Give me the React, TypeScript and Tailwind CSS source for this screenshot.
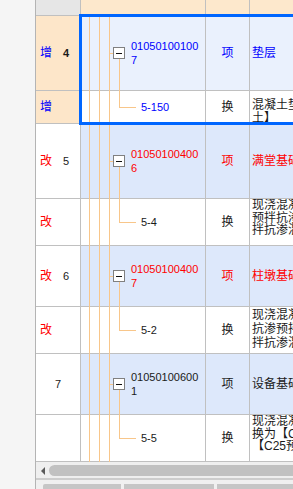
const LINE = "bg-[#f8c68a]";

type Tone = "blue" | "red" | "black";

const toneClass: Record<Tone, string> = {
  blue: "text-[#0000ff]",
  red: "text-[#ff0000]",
  black: "text-[#1a1a1a]",
};

type Row =
  | {
      kind: "item";
      h: string;
      bg: string;
      tagBg: string;
      tag?: string;
      num: string;
      bold?: boolean;
      code: [string, string];
      name: string;
      tone: Tone;
    }
  | {
      kind: "sub";
      h: string;
      bg: string;
      tagBg: string;
      tag?: string;
      code: string;
      codeTone: Tone;
      lines: string[];
      pad?: string;
      leading?: string;
    };

const rows: Row[] = [
  { kind: "item", h: "h-[75px]", bg: "bg-[#eaf1fd]", tagBg: "bg-[#fde6c9]", tag: "增", num: "4", bold: true, code: ["01050100100", "7"], name: "垫层", tone: "blue" },
  { kind: "sub", h: "h-[33px]", bg: "bg-white", tagBg: "bg-[#fde6c9]", tag: "增", code: "5-150", codeTone: "blue", lines: ["混凝土垫层 换为【C15预拌混凝", "土】"], pad: "pt-[8px]" },
  { kind: "item", h: "h-[75px]", bg: "bg-[#dde8fb]", tagBg: "bg-white", tag: "改", num: "5", code: ["01050100400", "6"], name: "满堂基础", tone: "red" },
  { kind: "sub", h: "h-[47px]", bg: "bg-white", tagBg: "bg-white", tag: "改", code: "5-4", codeTone: "black", lines: ["现浇混凝土 满堂基础 换为【C30", "预拌抗渗混凝土P6】 换为【C30预", "拌抗渗混凝土P8】"] },
  { kind: "item", h: "h-[61px]", bg: "bg-[#dde8fb]", tagBg: "bg-white", tag: "改", num: "6", code: ["01050100400", "7"], name: "柱墩基础", tone: "red" },
  { kind: "sub", h: "h-[47px]", bg: "bg-white", tagBg: "bg-white", tag: "改", code: "5-2", codeTone: "black", lines: ["现浇混凝土 柱墩 换为【C30预拌", "抗渗预拌混凝土P6】 换为【C30", "拌抗渗混凝土P8】"], pad: "pt-px", leading: "leading-[14px]" },
  { kind: "item", h: "h-[61px]", bg: "bg-[#dde8fb]", tagBg: "bg-white", num: "7", code: ["01050100600", "1"], name: "设备基础", tone: "black" },
  { kind: "sub", h: "h-[47px]", bg: "bg-white", tagBg: "bg-white", code: "5-5", codeTone: "black", lines: ["现浇混凝土 设备基础", "换为【C25预拌混凝土】", "【C25预拌混凝土】"] },
];

function Guides() {
  return (
    <>
      <div className={`absolute left-[8px] top-0 bottom-[-1px] w-px ${LINE}`} />
      <div className={`absolute left-[18px] top-0 bottom-[-1px] w-px ${LINE}`} />
      <div className={`absolute left-[28px] top-0 bottom-[-1px] w-px ${LINE}`} />
    </>
  );
}

function TagCell({ tag, num, bold, bg }: { tag?: string; num?: string; bold?: boolean; bg: string }) {
  const tone = tag === "增" ? "text-[#0000ff]" : "text-[#ff0000]";
  return (
    <div className={`flex h-full w-[45px] shrink-0 items-center border-r border-b border-[#c0c0c0] ${bg}`}>
      {tag && <span className={`ml-[4px] w-[12px] text-[12px] ${tone}`}>{tag}</span>}
      {num && (
        <span className={`flex-1 text-center text-[11px] text-[#1a1a1a] ${bold ? "font-bold" : ""}`}>{num}</span>
      )}
    </div>
  );
}

function ItemRow({ row }: { row: Extract<Row, { kind: "item" }> }) {
  const tone = toneClass[row.tone];
  return (
    <div className={`flex ${row.h}`}>
      <TagCell tag={row.tag} num={row.num} bold={row.bold} bg={row.tagBg} />
      <div className={`relative flex h-full w-[125px] shrink-0 items-center border-r border-b border-[#c0c0c0] ${row.bg}`}>
        <Guides />
        <div className={`absolute left-[28px] top-1/2 h-px w-[4px] ${LINE}`} />
        <div className={`absolute left-[38px] top-1/2 bottom-[-1px] w-px ${LINE}`} />
        <div className="relative ml-[32px] flex h-[12px] w-[12px] shrink-0 items-center justify-center border border-[#808080] bg-white">
          <span className="h-px w-[6px] bg-[#111]" />
        </div>
        <div className={`ml-[6px] text-[11px] leading-[14px] ${tone}`}>
          <div>{row.code[0]}</div>
          <div>{row.code[1]}</div>
        </div>
      </div>
      <div className={`flex h-full w-[44px] shrink-0 items-center justify-center border-r border-b border-[#c0c0c0] text-[12px] ${row.bg} ${tone}`}>
        项
      </div>
      <div className={`flex h-full min-w-0 flex-1 items-center overflow-hidden whitespace-nowrap border-b border-[#c0c0c0] pl-[2px] text-[12px] ${row.bg} ${tone}`}>
        {row.name}
      </div>
    </div>
  );
}

function SubRow({ row }: { row: Extract<Row, { kind: "sub" }> }) {
  return (
    <div className={`flex ${row.h}`}>
      <TagCell tag={row.tag} bg={row.tagBg} />
      <div className={`relative flex h-full w-[125px] shrink-0 items-center border-r border-b border-[#c0c0c0] ${row.bg}`}>
        <Guides />
        <div className={`absolute left-[38px] top-0 h-1/2 w-px ${LINE}`} />
        <div className={`absolute left-[38px] top-1/2 h-px w-[17px] ${LINE}`} />
        <span className={`ml-[60px] text-[11px] ${toneClass[row.codeTone]}`}>{row.code}</span>
      </div>
      <div className={`flex h-full w-[44px] shrink-0 items-center justify-center border-r border-b border-[#c0c0c0] text-[12px] text-[#1a1a1a] ${row.bg}`}>
        换
      </div>
      <div
        className={`h-full min-w-0 flex-1 overflow-hidden whitespace-nowrap border-b border-[#c0c0c0] pl-[2px] text-[12px] text-[#1a1a1a] ${row.leading ?? "leading-[12.5px]"} ${row.pad ?? ""} ${row.bg}`}
      >
        {row.lines.map((l, i) => (
          <div key={i}>{l}</div>
        ))}
      </div>
    </div>
  );
}

export default function App() {
  return (
    <div className="flex h-[489px] w-[293px] overflow-hidden bg-[#f0f0f0] font-['Liberation_Sans','Noto_Sans_CJK_SC',sans-serif]">
      {/* side strip */}
      <div className="h-full w-[36px] shrink-0 border-r border-[#b4b4b4] bg-[#f5f5f5]" />

      <div className="flex min-w-0 flex-1 flex-col">
        <div className="relative h-[462px] overflow-hidden bg-white">
          {/* header */}
          <div className="flex h-[16px]">
            <div className="h-full w-[45px] shrink-0 border-r border-b border-[#c0c0c0] bg-[#e6e6e6]" />
            <div className="h-full w-[125px] shrink-0 border-r border-b border-[#c0c0c0] bg-[#fde8cc]" />
            <div className="h-full w-[44px] shrink-0 border-r border-b border-[#c0c0c0] bg-[#fde8cc]" />
            <div className="h-full flex-1 border-b border-[#c0c0c0] bg-[#fde8cc]" />
          </div>

          {rows.map((r, i) => (r.kind === "item" ? <ItemRow key={i} row={r} /> : <SubRow key={i} row={r} />))}

          {/* selection frame */}
          <div className="pointer-events-none absolute left-[43px] top-[14px] h-[111px] w-[320px] border-[3px] border-[#0066ff]" />
        </div>

        {/* horizontal scrollbar */}
        <div className="flex h-[16px] items-start bg-[#efefef] pt-[3px]">
          <div className="ml-[5px] mt-[2px] h-0 w-0 border-y-[4px] border-r-[4px] border-y-transparent border-r-[#5a5a5a]" />
          <div className="ml-[4px] h-[11px] flex-1 rounded-l-full bg-[#c1c1c1]" />
        </div>
        <div className="h-[2px] bg-[#cdcdcd]" />

        {/* sheet tabs */}
        <div className="flex flex-1 items-end gap-[3px] bg-[#f0f0f0] pl-[7px]">
          <div className="h-[5px] w-[78px] rounded-tl-[2px] bg-[#c6c6c6]" />
          <div className="h-[5px] w-[90px] bg-[#c6c6c6]" />
          <div className="h-[5px] flex-1 bg-[#c6c6c6]" />
        </div>
      </div>
    </div>
  );
}
